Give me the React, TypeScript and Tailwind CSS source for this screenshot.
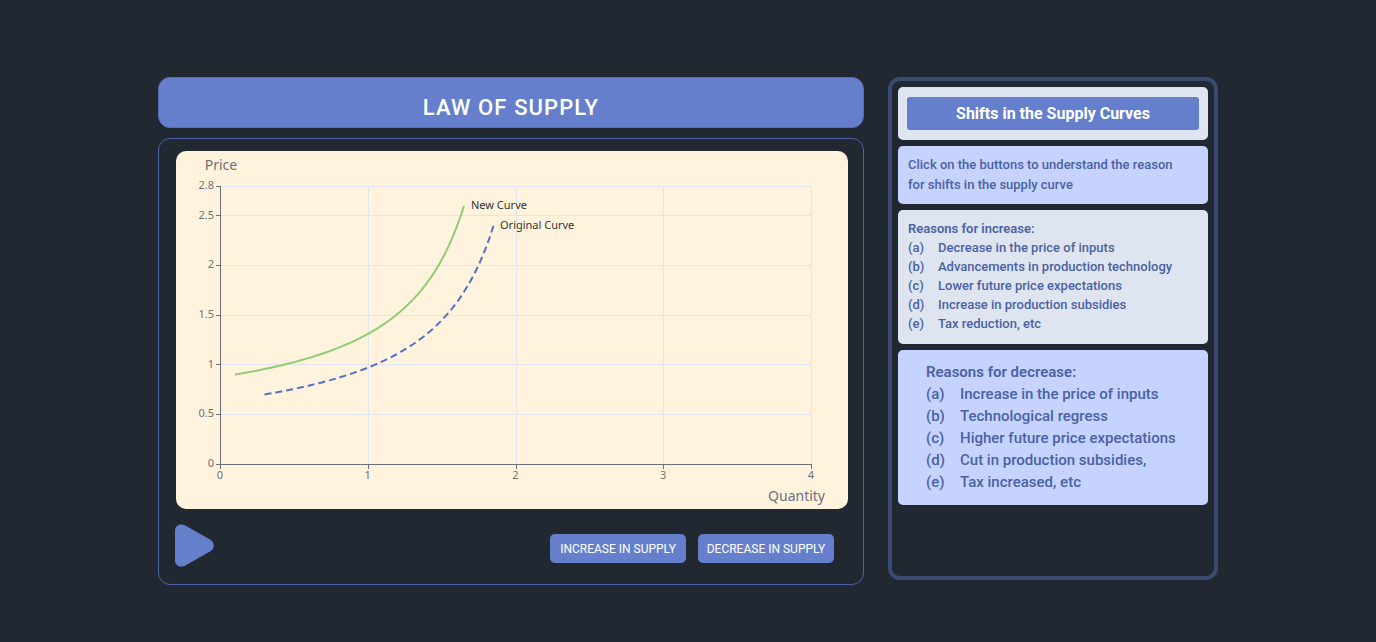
const PLOT = { left: 45, right: 636, top: 35, bottom: 313 };
const X_MAX = 4;
const Y_MAX = 2.8;
const X_TICKS = [0, 1, 2, 3, 4];
const Y_TICKS = [0, 0.5, 1, 1.5, 2, 2.5, 2.8];

const toX = (q: number) => PLOT.left + (q / X_MAX) * (PLOT.right - PLOT.left);
const toY = (p: number) => PLOT.bottom - (p / Y_MAX) * (PLOT.bottom - PLOT.top);
const crisp = (v: number) => Math.floor(v) + 0.5;

// Supply price as a function of quantity, moved by a shift in each direction.
function supplyPath(shiftQ: number, shiftP: number) {
  const steps = 60;
  const points: string[] = [];
  for (let i = 0; i <= steps; i++) {
    const q = 0.1 + (1.55 * i) / steps;
    const p = 0.394 + 1.019 / (2.112 - q);
    points.push(`${(toX(q + shiftQ) - 0.8).toFixed(2)} ${toY(p + shiftP).toFixed(2)}`);
  }
  return "M" + points.join("L");
}

function SupplyChart() {
  return (
    <svg
      viewBox="0 0 672 358"
      role="img"
      aria-label="Supply curves, price against quantity"
      className="block w-full rounded-[10px] bg-[#fff3de] font-['Noto_Sans',sans-serif]"
    >
      <g stroke="#e0e6f1">
        {X_TICKS.slice(1).map((t) => (
          <line key={t} x1={crisp(toX(t) - 0.5)} x2={crisp(toX(t) - 0.5)} y1={PLOT.top} y2={PLOT.bottom} />
        ))}
        {Y_TICKS.slice(1).map((t) => (
          <line key={t} x1={PLOT.left} x2={PLOT.right} y1={crisp(toY(t))} y2={crisp(toY(t))} />
        ))}
      </g>
      <g stroke="#6e7079">
        <path d={`M44.5 ${PLOT.top}V${PLOT.bottom}M44 313.5H${PLOT.right}`} fill="none" />
        {X_TICKS.map((t) => (
          <line key={t} x1={crisp(toX(t) - 0.5)} x2={crisp(toX(t) - 0.5)} y1="313" y2="318" />
        ))}
        {Y_TICKS.map((t) => (
          <line key={t} x1="40" x2="45" y1={crisp(toY(t))} y2={crisp(toY(t))} />
        ))}
      </g>
      <g fill="#6e7079" fontSize="11">
        {X_TICKS.map((t) => (
          <text key={t} x={toX(t) - 1} y="328" textAnchor="middle">
            {t}
          </text>
        ))}
        {Y_TICKS.map((t) => (
          <text key={t} x="38" y={toY(t) + 3} textAnchor="end">
            {t}
          </text>
        ))}
      </g>
      <g fill="#6e7079" fontSize="14">
        <text x="45" y="19" textAnchor="middle">
          Price
        </text>
        <text x="649" y="350" textAnchor="end">
          Quantity
        </text>
      </g>
      <path d={supplyPath(0, 0)} fill="none" stroke="#91cc75" strokeWidth="2" />
      <path d={supplyPath(0.2, -0.2)} fill="none" stroke="#5470c6" strokeWidth="2" strokeDasharray="7 4" />
      <g fill="#333333" fontSize="11">
        <text x="295" y="58">
          New Curve
        </text>
        <text x="324" y="78">
          Original Curve
        </text>
      </g>
    </svg>
  );
}

const INCREASE = [
  "Decrease in the price of inputs",
  "Advancements in production technology",
  "Lower future price expectations",
  "Increase in production subsidies",
  "Tax reduction, etc",
];

const DECREASE = [
  "Increase in the price of inputs",
  "Technological regress",
  "Higher future price expectations",
  "Cut in production subsidies,",
  "Tax increased, etc",
];

const MARKS = ["(a)", "(b)", "(c)", "(d)", "(e)"];

export default function App() {
  return (
    <div className="min-h-screen bg-[#222831] pt-[77px] pb-14 font-[Roboto,sans-serif]">
      <main className="mx-auto flex max-w-[1060px] items-start gap-6">
        <div className="min-w-0 flex-1">
          <h1 className="flex h-[51px] items-center justify-center rounded-xl border border-[#556eb4] bg-[#667fcc] pt-2.5 text-[22px] font-medium tracking-wider text-white">
            LAW OF SUPPLY
          </h1>
          <section className="mt-2.5 rounded-xl border border-[#4a63a8] pt-3 pr-[15px] pb-[17px] pl-[17px]">
            <SupplyChart />
            <div className="mt-[15px] flex items-center justify-between pr-3.5">
              <button type="button" aria-label="Play" className="-ml-px">
                <svg width="39" height="43" viewBox="0 0 39 43" fill="#667fcc">
                  <path d="M0 6.5C0 1.5 5 -1 9.8 1.3L35 15.5C40 18.5 40 24.5 35 27.5L9.8 41.7C5 44 0 41.5 0 36.5Z" />
                </svg>
              </button>
              <div className="flex gap-3 pt-1.5">
                <button type="button" className="h-[29px] w-[136px] rounded-[5px] bg-[#667fcc] text-xs text-white">
                  INCREASE IN SUPPLY
                </button>
                <button type="button" className="h-[29px] w-[136px] rounded-[5px] bg-[#667fcc] text-xs text-white">
                  DECREASE IN SUPPLY
                </button>
              </div>
            </div>
          </section>
        </div>

        <aside className="flex min-h-[503px] w-[330px] shrink-0 flex-col gap-1.5 rounded-xl border-4 border-[#3b4a70] p-1.5 font-medium text-[#4a62a3]">
          <div className="rounded-[5px] bg-[#dfe5f0] px-[9px] py-2.5">
            <h2 className="rounded-[3px] bg-[#667fcc] text-center text-base leading-[33px] font-bold text-white">
              Shifts in the Supply Curves
            </h2>
          </div>
          <p className="rounded-[5px] bg-[#c7d3ff] py-[9px] pr-6 pl-2.5 text-[13px] leading-5">
            Click on the buttons to understand the reason for shifts in the supply curve
          </p>
          <div className="rounded-[5px] bg-[#dfe5f0] px-2.5 pt-[9px] pb-[11px] text-[13px] leading-[19px]">
            <h3 className="font-semibold">Reasons for increase:</h3>
            <ul>
              {INCREASE.map((text, i) => (
                <li key={text} className="flex">
                  <span className="w-[30px]">{MARKS[i]}</span>
                  {text}
                </li>
              ))}
            </ul>
          </div>
          <div className="rounded-[5px] bg-[#c7d3ff] px-7 pt-[11px] pb-3 text-[15px] leading-[22px]">
            <h3 className="font-semibold">Reasons for decrease:</h3>
            <ul>
              {DECREASE.map((text, i) => (
                <li key={text} className="flex">
                  <span className="w-[34px]">{MARKS[i]}</span>
                  {text}
                </li>
              ))}
            </ul>
          </div>
        </aside>
      </main>
    </div>
  );
}
